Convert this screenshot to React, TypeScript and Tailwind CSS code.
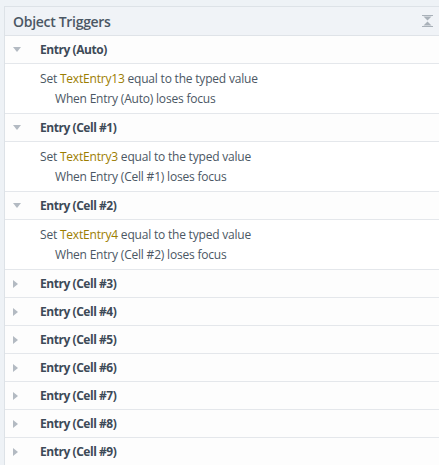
import React from "react";

type Item = { name: string; open?: boolean; target?: string };

const items: Item[] = [
  { name: "Entry (Auto)", open: true, target: "TextEntry13" },
  { name: "Entry (Cell #1)", open: true, target: "TextEntry3" },
  { name: "Entry (Cell #2)", open: true, target: "TextEntry4" },
  { name: "Entry (Cell #3)" },
  { name: "Entry (Cell #4)" },
  { name: "Entry (Cell #5)" },
  { name: "Entry (Cell #6)" },
  { name: "Entry (Cell #7)" },
  { name: "Entry (Cell #8)" },
  { name: "Entry (Cell #9)" },
];

function Caret({ open }: { open?: boolean }) {
  return open ? (
    <svg width="8" height="5" viewBox="0 0 8 5" className="block">
      <path d="M0 0 H8 L4 5 Z" fill="#b3bac2" />
    </svg>
  ) : (
    <svg width="5" height="8" viewBox="0 0 5 8" className="block">
      <path d="M0 0 V8 L5 4 Z" fill="#b3bac2" />
    </svg>
  );
}

export default function App() {
  return (
    <div
      className="w-[439px] h-[465px] overflow-hidden bg-[#eef2f6] pt-[6px] pl-[4px]"
      style={{ fontFamily: '"Open Sans", "Noto Sans", sans-serif' }}
    >
      <div className="h-full bg-white border-t border-l border-[#dde2e7]">
        <div className="h-[29px] bg-[#f0f3f7] border-b border-[#dfe3e8] flex items-center justify-between pl-[8px] pr-[6px]">
          <span className="text-[14px] font-semibold text-[#4b5764] tracking-[-0.3px]">
            Object Triggers
          </span>
          <svg width="11" height="12" viewBox="0 0 11 12" className="block">
            <rect x="0" y="0" width="11" height="1" fill="#a9b1b9" />
            <path d="M1.5 1.5 H9.5 L5.5 5.5 Z" fill="#a9b1b9" />
            <path d="M1.5 10.5 H9.5 L5.5 6.5 Z" fill="#a9b1b9" />
            <rect x="0" y="11" width="11" height="1" fill="#a9b1b9" />
          </svg>
        </div>
        {items.map((it) => (
          <div key={it.name}>
            <div className="h-[28px] flex items-center border-b border-[#e4e7eb] bg-[#fdfdfd]">
              <div className="w-[35px] flex pl-[8px]">
                <Caret open={it.open} />
              </div>
              <span className="text-[12px] font-bold text-[#3d4a57] tracking-[-0.45px]">
                {it.name}
              </span>
            </div>
            {it.open && (
              <div className="h-[50px] border-b border-[#e4e7eb] pt-[5px] pl-[35px] text-[12px] leading-[20px] text-[#4b5764] tracking-[-0.2px]">
                <div>
                  Set <span className="text-[#9c7d00]">{it.target}</span> equal to the typed value
                </div>
                <div className="pl-[15px]">When {it.name} loses focus</div>
              </div>
            )}
          </div>
        ))}
      </div>
    </div>
  );
}
